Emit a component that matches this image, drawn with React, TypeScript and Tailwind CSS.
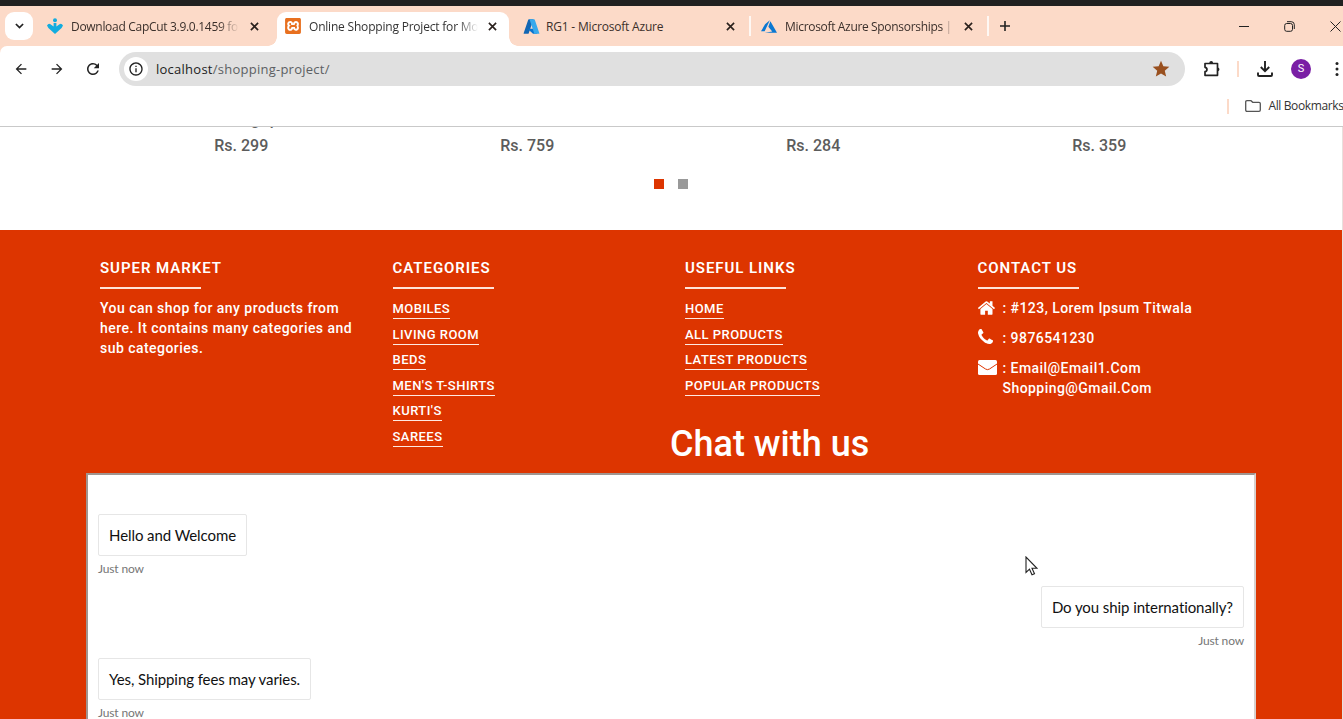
import React from "react";
import { MdArrowBack, MdArrowForward, MdRefresh, MdInfoOutline, MdStar } from "react-icons/md";
import { SiXampp } from "react-icons/si";

const CloseIcon = () => (
  <svg viewBox="0 0 10 10" className="size-[9px] shrink-0" fill="none" stroke="#2a211d" strokeWidth="1.8">
    <path d="M1 1l8 8M9 1L1 9" />
  </svg>
);

const DownloadSiteIcon = () => (
  <svg viewBox="0 0 16 16" className="size-4 shrink-0" fill="#12acdf">
    <circle cx="8" cy="2.200" r="2" />
    <path d="M6.600 5h2.800v3.500L12.500 6.200Q14.500 5 16 7.400L14.600 10 8 16 1.400 10 0 7.400Q1.500 5 3.500 6.200L6.600 8.500z" />
  </svg>
);

const AzureIcon = () => (
  <svg viewBox="0 0 96 96" className="size-[17px] shrink-0">
    <path fill="#1266b3" d="M33.300 6.500h26L32.300 86.500a4 4 0 0 1-4 3H8a4 4 0 0 1-4-5.500l25.500-74.800a4 4 0 0 1 3.800-2.700z" />
    <path fill="#0a74cf" d="M71 60.300H30a2 2 0 0 0-1.300 3.300L55 88a4 4 0 0 0 3 1.200h23z" />
    <path fill="#38a9ec" d="M66.600 9.200a4 4 0 0 0-4-2.700h-29a4 4 0 0 1 4 2.700l25 74.800a4 4 0 0 1-4 5.500H88a4 4 0 0 0 4-5.500z" />
  </svg>
);

const AzureClassicIcon = () => (
  <svg viewBox="2 4 20 16" className="h-[13px] w-[16px] shrink-0" fill="#0a78d2">
    <path d="M13.050 4.240L6.560 18.050 2 18l5.090-8.760zm.7 1.090L22 19.760H6.740l9.300-1.660-4.870-5.790z" />
  </svg>
);

const HomeIcon = () => (
  <svg viewBox="90 240 1620 1320" className="h-[14px] w-[17px]" fill="white">
    <path d="M1472 992v480q0 26-19 45t-45 19h-384v-384h-256v384h-384q-26 0-45-19t-19-45v-480q0-1 .5-3t.5-3l575-474 575 474q1 2 1 6zm223-69l-62 74q-8 9-21 11h-3q-13 0-21-7l-692-577-692 577q-12 8-24 7-13-2-21-11l-62-74q-8-10-7-23.500t11-21.500l719-599q32-26 76-26t76 26l244 204v-195q0-14 9-23t23-9h192q14 0 23 9t9 23v408l219 182q10 8 11 21.500t-7 23.500z" />
  </svg>
);

const PhoneIcon = () => (
  <svg viewBox="192 128 1408 1408" className="size-[15px]" fill="white">
    <path d="M1600 1240q0 27-10 70.500t-21 68.500q-21 50-122 106-94 51-186 51-27 0-53-3.500t-57.500-12.500-47-14.500-55.500-20.500-49-18q-98-35-175-83-127-79-264-216t-216-264q-48-77-83-175-3-9-18-49t-20.500-55.500-14.500-47-12.500-57.500-3.500-53q0-92 51-186 56-101 106-122 25-11 68.500-21t70.500-10q14 0 21 3 18 6 53 76 11 19 30 54t35 63.500 31 53.500q3 4 17.500 25t21.500 35.500 7 28.500q0 20-28.500 50t-62 55-62 53-28.500 46q0 9 5 22.500t8.500 20.500 14 24 11.500 19q76 137 174 235t235 174q2 1 19 11.500t24 14 20.500 8.500 22.500 5q18 0 46-28.500t53-62 55-62 50-28.500q14 0 28.500 7t35.500 21.500 25 17.500q25 15 53.500 31t63.500 35 54 30q70 35 76 53 3 7 3 21z" />
  </svg>
);

const MailIcon = () => (
  <svg viewBox="0 0 19 15" className="h-[15px] w-[19px]">
    <rect width="19" height="15" rx="1.500" fill="white" />
    <path d="M0 4l7.500 5q2 1.300 4 0L19 4" fill="none" stroke="#dd3500" strokeWidth="1" />
  </svg>
);

function TabStrip() {
  return (
    <div className="flex h-10 items-center bg-[#fcdac8] font-['Open_Sans',sans-serif] text-[12px] text-[#3b302b]">
      <button className="ml-[5px] flex size-7 shrink-0 items-center justify-center rounded-[9px] bg-white">
        <svg viewBox="0 0 10 6" className="h-[6px] w-[9px]" fill="none" stroke="#222" strokeWidth="1.900"><path d="M1 .8l4 4 4-4" /></svg>
      </button>
      <div className="flex w-[244px] shrink-0 items-center pl-[14px]">
        <DownloadSiteIcon />
        <span className="ml-2 w-[168px] overflow-hidden pt-[2px] whitespace-nowrap tracking-[-0.3px] [mask-image:linear-gradient(to_right,black_88%,transparent)]">Download CapCut 3.9.0.1459 fo</span>
        <span className="ml-[11px]"><CloseIcon /></span>
      </div>
      <div className="relative flex h-[34px] w-[232px] shrink-0 items-center self-end rounded-t-[9px] bg-white pb-[6px] pl-2 text-[#333]">
        <span className="absolute bottom-0 -left-[9px] size-[9px] bg-[radial-gradient(circle_at_0_0,#fcdac8_8.500px,white_9px)]" />
        <span className="absolute -right-[9px] bottom-0 size-[9px] bg-[radial-gradient(circle_at_100%_0,#fcdac8_8.500px,white_9px)]" />
        <SiXampp className="size-4 shrink-0 text-[#e8701f]" />
        <span className="ml-2 w-[169px] overflow-hidden pt-[2px] whitespace-nowrap tracking-[-0.2px] [mask-image:linear-gradient(to_right,black_88%,transparent)]">Online Shopping Project for Mo</span>
        <span className="ml-[10px]"><CloseIcon /></span>
      </div>
      <div className="flex w-[242px] shrink-0 items-center border-r-2 border-white/80 pl-[14px]">
        <AzureIcon />
        <span className="ml-[6px] w-[170px] pt-[2px] whitespace-nowrap tracking-[-0.19px]">RG1 - Microsoft Azure</span>
        <span className="ml-[10px]"><CloseIcon /></span>
      </div>
      <div className="flex w-[238px] shrink-0 items-center border-r-2 border-white/80 pl-[10px]">
        <AzureClassicIcon />
        <span className="ml-2 w-[168px] pt-[2px] whitespace-nowrap tracking-[-0.3px] [mask-image:linear-gradient(to_right,black_93%,transparent)] [word-spacing:-0.3px]">Microsoft Azure Sponsorships |</span>
        <span className="ml-[11px]"><CloseIcon /></span>
      </div>
      <svg viewBox="0 0 10 10" className="ml-[11px] size-[10px]" fill="none" stroke="#222" strokeWidth="1.600"><path d="M5 0v10M0 5h10" /></svg>
      <div className="mr-[2px] ml-auto flex shrink-0 items-center">
        <svg viewBox="0 0 10 10" className="size-[10px]" stroke="#222"><path d="M0 5.500h10" /></svg>
        <svg viewBox="0 0 11 11" className="ml-[35px] size-[11px]" fill="none" stroke="#222"><rect x=".7" y="2.500" width="7.800" height="7.800" rx="2" /><path d="M3 .7h4.300q3 0 3 3V8" /></svg>
        <svg viewBox="0 0 11 11" className="ml-[35px] size-[11px]" stroke="#222"><path d="M.5.5l10 10M10.500.5l-10 10" /></svg>
      </div>
    </div>
  );
}

function Toolbar() {
  return (
    <div className="bg-[#fcdac8]">
      <div className="flex h-[46px] items-center rounded-tl-[7px] bg-white text-[#222]">
        <MdArrowBack className="ml-[13px] size-4 shrink-0" />
        <MdArrowForward className="ml-5 size-4 shrink-0" />
        <MdRefresh className="ml-[19px] size-[18px] shrink-0" />
        <div className="ml-[17px] flex h-[34px] w-[1066px] shrink-0 items-center rounded-full bg-[#e0e0e0] pl-[5px] font-['Open_Sans',sans-serif] text-[13px] text-[#5c5f63]">
          <span className="flex size-6 items-center justify-center rounded-full bg-white"><MdInfoOutline className="size-4 text-[#222]" /></span>
          <span className="ml-2 pt-[2px] tracking-[0.25px]"><span className="text-[#222]">localhost</span>/shopping-project/</span>
          <MdStar className="mr-[14px] ml-auto size-[20px] text-[#99501f]" />
        </div>
        <svg viewBox="0 0 18 18" className="ml-[18px] size-[18px] shrink-0" fill="none" stroke="#222" strokeWidth="1.700" strokeLinejoin="round">
          <path d="M2 3.500h12.500v11.800H2v-3.600c2.600-.4 2.600-4 0-4.400z" />
          <path d="M6.300 3a1.900 1.900 0 0 1 3.800 0zM15 7.500a1.900 1.900 0 0 1 0 3.700z" fill="#222" stroke="none" />
        </svg>
        <span className="ml-[16px] h-4 w-[2px] shrink-0 bg-[#fcdac8]" />
        <svg viewBox="0 0 16 16" className="ml-[18px] size-4 shrink-0" fill="none" stroke="#222" strokeWidth="1.900">
          <path d="M8 0v10M3.800 6l4.200 4.200L12.200 6M1 11.500v2.500q0 1 1 1h12q1 0 1-1v-2.500" />
        </svg>
        <span className="ml-[18px] flex size-5 shrink-0 items-center justify-center rounded-full bg-[#7a1fa5] font-['Roboto',sans-serif] text-[11px] text-white">S</span>
        <svg viewBox="0 0 4 16" className="ml-[24px] h-4 w-1 shrink-0" fill="#222"><circle cx="2" cy="2.500" r="1.500" /><circle cx="2" cy="8" r="1.500" /><circle cx="2" cy="13.500" r="1.500" /></svg>
      </div>
      <div className="flex h-[35px] items-center overflow-hidden border-b border-[#c9c9c9] bg-white pb-1.5">
        <span className="ml-[1227px] h-[15px] w-[1.500px] shrink-0 bg-[#fcdac8]" />
        <svg viewBox="0 0 16 12" className="ml-[16px] h-3 w-4 shrink-0" fill="none" stroke="#555" strokeWidth="1.300"><path d="M.7 2q0-1.300 1.300-1.300h4L7.700 2.300H14q1.300 0 1.300 1.300v6.400q0 1.300-1.300 1.300H2Q.7 11.300.7 10z" /></svg>
        <span className="ml-[8px] font-['Open_Sans',sans-serif] text-[12px] whitespace-nowrap tracking-[-0.38px] text-[#333]">All Bookmarks</span>
      </div>
    </div>
  );
}

const Heading = ({ children }: { children: React.ReactNode }) => (
  <h3 className="mb-[9px] flex h-[30px] flex-col justify-between text-[15px] leading-[18px] font-semibold tracking-[0.950px] whitespace-nowrap">
    {children}
    <span className="block h-[2px] w-[101px] bg-[#ffe3d8]" />
  </h3>
);

const Links = ({ items }: { items: string[] }) => (
  <ul className="flex flex-col items-start text-[13px] font-medium">
    {items.map((t) => (
      <li key={t} className="h-[25.550px]">
        <a className="block h-[21px] border-b border-[#ffeae2] leading-[21px] tracking-[0.460px] whitespace-nowrap">{t}</a>
      </li>
    ))}
  </ul>
);

function Footer() {
  return (
    <div className="grid h-[243px] grid-cols-[292.500px_292.500px_292.500px_1fr] pt-[29px] pl-[100px] text-[14px] leading-5 font-medium text-white">
      <section>
        <Heading>SUPER MARKET</Heading>
        <p className="w-[270px] tracking-[0.460px]">You can shop for any products from<br />here. It contains many categories and<br />sub categories.</p>
      </section>
      <section>
        <Heading>CATEGORIES</Heading>
        <Links items={["MOBILES", "LIVING ROOM", "BEDS", "MEN'S T-SHIRTS", "KURTI'S", "SAREES"]} />
      </section>
      <section>
        <Heading>USEFUL LINKS</Heading>
        <Links items={["HOME", "ALL PRODUCTS", "LATEST PRODUCTS", "POPULAR PRODUCTS"]} />
        <h1 className="mt-[21px] -ml-[15px] text-[36px] leading-[46px] font-medium whitespace-nowrap">Chat with us</h1>
      </section>
      <section>
        <Heading>CONTACT US</Heading>
        <ul className="flex flex-col gap-[10px] tracking-[0.450px]">
          <li className="flex"><span className="flex h-[19px] w-[25px] items-center"><HomeIcon /></span>: #123, Lorem Ipsum Titwala</li>
          <li className="flex"><span className="flex h-[17px] w-[25px] items-center"><PhoneIcon /></span>: 9876541230</li>
          <li className="flex"><span className="flex h-[19px] w-[25px] items-center"><MailIcon /></span><span>: Email@Email1.Com<br />Shopping@Gmail.Com</span></li>
        </ul>
      </section>
    </div>
  );
}

const Message = ({ text, mine }: { text: string; mine?: boolean }) => (
  <div className={mine ? "flex h-[72px] flex-col items-end" : "flex h-[72px] flex-col items-start"}>
    <div className="h-[42px] rounded-[2px] border border-[#e6e6e6] px-[10px] text-[15px] leading-[40px] tracking-[-0.080px] whitespace-nowrap text-[#111]">{text}</div>
    <div className="mt-[5px] text-[12px] leading-4 tracking-[-0.150px] text-[#767676]">Just now</div>
  </div>
);

export default function App() {
  return (
    <div className="relative flex h-[719px] w-[1343px] flex-col overflow-hidden bg-white">
      <div className="h-[6px] shrink-0 bg-[#202020]" />
      <TabStrip />
      <Toolbar />
      <main className="min-h-0 flex-1 overflow-hidden border-r border-[#e8e0dd] font-['Roboto',sans-serif]">
        <div className="h-[103px]">
          <div className="grid grid-cols-[286px_286px_286px_286px] pl-[98.300px] text-center text-[16px] font-medium text-[#5c5c5c]">
            {["299", "759", "284", "359"].map((price, i) => (
              <div key={price}>
                <div className="flex h-[3px] items-end justify-center overflow-hidden leading-5">{i === 0 && <span className="ml-[47px] [word-spacing:6px]">g p</span>}</div>
                <div className="mt-[6px] leading-5">Rs. {price}</div>
              </div>
            ))}
          </div>
          <div className="mt-[23px] flex gap-[14px] pl-[654px]">
            <span className="size-[10px] bg-[#dd3500]" />
            <span className="size-[10px] bg-[#999]" />
          </div>
        </div>
        <footer className="h-[500px] bg-[#dd3500]">
          <Footer />
          <div className="ml-[86px] h-[256px] w-[1170px] border-2 border-t-[#a09590] border-r-[#d8d0cd] border-l-[#a09590] bg-white pt-[39px] pr-[10px] pl-[10px] font-['Lato',sans-serif]">
            <Message text="Hello and Welcome" />
            <Message text="Do you ship internationally?" mine />
            <Message text="Yes, Shipping fees may varies." />
          </div>
        </footer>
      </main>
      <svg viewBox="0 0 13 20" className="absolute top-[556px] left-[1025px] h-[20px] w-[13px]" fill="white" stroke="#222" strokeWidth="1.100">
        <path d="M1 1v15.500l3.500-3.300 2.500 5.600 2.500-1.100-2.500-5.400H12z" />
      </svg>
    </div>
  );
}
